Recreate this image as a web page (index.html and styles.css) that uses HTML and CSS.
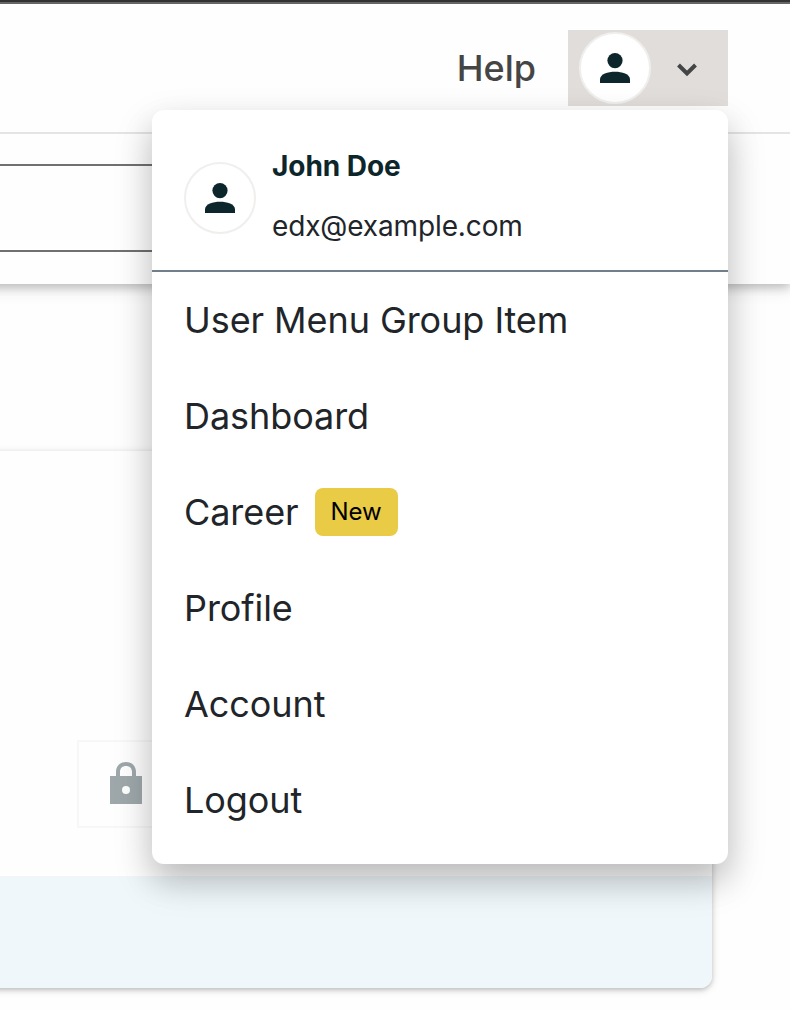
FILE: index.html
```html
<!DOCTYPE html>
<html lang="en">
<head>
<meta charset="utf-8">
<title>User menu</title>
<link rel="stylesheet" href="styles.css">
</head>
<body>
<header class="site-header">
  <nav class="nav">
    <a class="help">Help</a>
    <div class="account">
      <button class="toggle" aria-label="User menu">
        <span class="avatar"><svg viewBox="0 0 30 30"><circle cx="15" cy="7.6" r="7.6"/><path d="M0 30v-3.8C0 21 8 18.7 15 18.7S30 21 30 26.200V30z"/></svg></span>
        <svg class="chevron" viewBox="0 0 20 14"><path d="M1.500 2 10 10.500 18.500 2"/></svg>
      </button>
      <div class="menu">
        <div class="profile">
          <span class="avatar"><svg viewBox="0 0 30 30"><circle cx="15" cy="7.6" r="7.6"/><path d="M0 30v-3.8C0 21 8 18.7 15 18.7S30 21 30 26.200V30z"/></svg></span>
          <div class="identity">
            <span class="name">John Doe</span>
            <span class="email">edx@example.com</span>
          </div>
        </div>
        <ul class="items">
          <li>User Menu Group Item</li>
          <li>Dashboard</li>
          <li>Career<span class="badge">New</span></li>
          <li>Profile</li>
          <li>Account</li>
          <li>Logout</li>
        </ul>
      </div>
    </div>
  </nav>
  <div class="search"><div class="field"></div></div>
</header>
<main class="card">
  <div class="card-body">
    <div class="locked"><svg viewBox="0 0 32 42"><path fill-rule="evenodd" d="M0 14h6v-4C6 4 10 0 16 0s10 4 10 10v4h6v28H0zM10 14h12v-4c0-4-2.500-6-6-6s-6 2-6 6zM16 24a4 4 0 1 0 0 8 4 4 0 0 0 0-8z"/></svg></div>
  </div>
  <div class="card-footer"></div>
</main>
</body>
</html>
```
FILE: styles.css
```css
* { box-sizing: border-box; }
body {
  margin: 0;
  height: 1010px;
  overflow: hidden;
  background: #fefefe;
  color: #212529;
  font-family: Inter, "Liberation Sans", sans-serif;
  font-size: 36px;
}
.site-header {
  position: relative;
  z-index: 1;
  height: 284px;
  margin-left: -30px;
  background: #fefefe;
  border-top: 2px solid #333;
  box-shadow: 0 4px 8px rgba(0,0,0,.15), 0 4px 16px rgba(0,0,0,.15);
}
.nav {
  display: flex;
  justify-content: flex-end;
  height: 132px;
  padding: 26px 62px 0 0;
  border-top: 2px solid #666;
  border-bottom: 2px solid #e4e4e4;
}
.help {
  margin-right: 32px;
  line-height: 76px;
  font-weight: 500;
  color: #454545;
}
.account { position: relative; width: 160px; height: 76px; }
.toggle {
  display: flex;
  align-items: center;
  width: 160px;
  height: 76px;
  padding: 0 0 0 11px;
  border: 0;
  background: #e1dddb;
}
.avatar {
  display: flex;
  flex: none;
  align-items: center;
  justify-content: center;
  width: 72px;
  height: 72px;
  border: 2px solid #f0efee;
  border-radius: 50%;
  background: #fff;
}
.avatar svg { width: 30px; height: 30px; fill: #0c262b; }
.chevron {
  width: 20px;
  height: 14px;
  margin: 4px 0 0 26px;
  fill: none;
  stroke: #454545;
  stroke-width: 4;
}
.menu {
  position: absolute;
  top: 80px;
  right: 0;
  width: 576px;
  height: 754px;
  border-radius: 12px;
  background: #fff;
  box-shadow: 0 16px 32px rgba(0,0,0,.15), 0 16px 40px rgba(0,0,0,.15);
}
.profile {
  display: flex;
  height: 162px;
  padding: 26px 32px 0;
  border-bottom: 2px solid #707f89;
}
.profile .avatar { margin-top: 26px; }
.identity {
  display: flex;
  flex-direction: column;
  margin-left: 16px;
  font-size: 28px;
  line-height: 60px;
}
.name { font-weight: 700; color: #0c262b; letter-spacing: -.05px; }
.email { letter-spacing: -.13px; }
.items { margin: 0; padding: 0; list-style: none; }
.items li {
  display: flex;
  align-items: center;
  height: 96px;
  padding: 0 32px;
  letter-spacing: -.07px;
}
.badge {
  width: 83px;
  height: 48px;
  margin-left: 16px;
  border-radius: 8px;
  background: #e9cb45;
  color: #000;
  font-size: 24px;
  line-height: 48px;
  text-align: center;
}
.search { padding-top: 30px; }
.field { width: 700px; height: 88px; border: solid #707070; border-width: 2px 0; }
.card {
  width: 742px;
  height: 537px;
  margin: 167px 0 0 -30px;
  border-radius: 12px;
  background: #fefefe;
  box-shadow: 0 2px 4px rgba(0,0,0,.15), 0 2px 8px rgba(0,0,0,.15);
}
.card-body { height: 425px; padding: 289px 0 0 107px; }
.locked {
  height: 88px;
  width: 560px;
  padding: 20px 0 0 31px;
  border: 2px solid #f7f7f7;
}
.locked svg { display: block; width: 32px; height: 42px; fill: #9ea8aa; }
.card-footer { height: 112px; border-radius: 0 0 12px 12px; background: #eff7fa; }
```
